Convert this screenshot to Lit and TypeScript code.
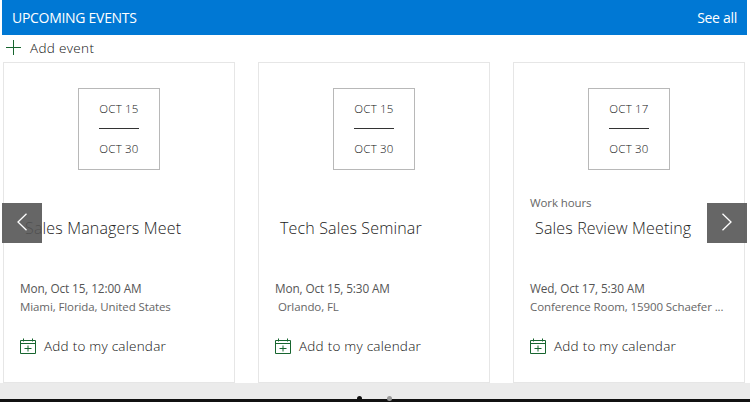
import { LitElement, html, css, svg } from "lit";
import { customElement } from "lit/decorators.js";

interface Ev {
  from: string;
  to: string;
  tag?: string;
  title: string;
  when: string;
  where: string;
}

const EVENTS: Ev[] = [
  { from: "OCT 15", to: "OCT 30", title: "Sales Managers Meet", when: "Mon, Oct 15, 12:00 AM", where: "Miami, Florida, United States" },
  { from: "OCT 15", to: "OCT 30", title: "Tech Sales Seminar", when: "Mon, Oct 15, 5:30 AM", where: "\u00a0Orlando, FL" },
  { from: "OCT 17", to: "OCT 30", tag: "Work hours", title: "Sales Review Meeting", when: "Wed, Oct 17, 5:30 AM", where: "Conference Room, 15900 Schaefer ..." },
];

const calIcon = svg`<svg class="cal" viewBox="0 0 16 16" width="16" height="16" fill="none" stroke="#17652f" stroke-width="1">
  <path d="M.5 2.5h15v13H.5zM.5 5.5h15M3.5 .5v3M12.5 .5v3M8 7.5v6M4.5 10.5h7"/></svg>`;

@customElement("app-root")
export class AppRoot extends LitElement {
  static styles = css`
    :host {
      display: flex; flex-direction: column; position: relative; overflow: hidden;
      width: 750px; height: 402px; background: #fff; color: #333;
      font-family: "Open Sans", "Noto Sans", sans-serif;
    }
    .head {
      flex: none; height: 35px; margin: 0 3px 0 2px; padding: 0 10px; background: #0078d4; color: #fff;
      display: flex; align-items: center; justify-content: space-between;
      font-size: 14px; font-weight: 500; letter-spacing: -.29px;
    }
    .add {
      flex: none; height: 27px; display: flex; align-items: center; gap: 9px; padding: 0 0 2px 6px; box-sizing: border-box;
      font-size: 13.5px; font-weight: 300; letter-spacing: .34px; color: #111;
    }
    .add svg { display: block; }
    .cards { flex: none; display: flex; gap: 23px; padding-left: 3px; height: 321px; }
    .card {
      box-sizing: border-box; width: 232px; height: 321px; border: 1px solid #e6e6e6;
      display: flex; flex-direction: column; padding: 25px 16px 0 16px; background: #fff;
    }
    .dates {
      box-sizing: border-box; width: 82px; height: 82px; border: 1px solid #b8b8b8; align-self: center;
      display: flex; flex-direction: column; align-items: center; font-size: 11.5px; font-weight: 300; letter-spacing: .2px; color: #111;
      padding-top: 10px; flex: none;
    }
    .dates span { line-height: 20px; height: 20px; }
    .dates i { display: block; width: 40px; height: 1px; background: #333; margin: 9px 0 10px; flex: none; }
    .tag { height: 20px; margin-top: 23px; line-height: 20px; font-size: 11.5px; font-weight: 400; letter-spacing: -.1px; color: #666; }
    .title { height: 30px; line-height: 30px; padding-left: 5px; font-size: 16px; font-weight: 300; letter-spacing: .16px; color: #222; white-space: nowrap; }
    .when { margin-top: 35px; height: 20px; line-height: 20px; font-size: 11.8px; font-weight: 400; letter-spacing: -.12px; color: #555; }
    .where {
      height: 18px; line-height: 18px; font-size: 11.5px; font-weight: 400; letter-spacing: -.1px; color: #666;
      white-space: nowrap;
    }
    .cta { margin-top: 20px; display: flex; align-items: center; gap: 8px; font-size: 13.5px; font-weight: 300; letter-spacing: .24px; height: 20px; color: #111; }
    .cal { display: block; flex: none; }
    .nav {
      position: absolute; top: 203px; width: 40px; height: 40px; background: rgba(85,85,85,.9);
      display: flex; align-items: center; justify-content: center;
    }
    .nav svg { margin-top: -2px; }
    .nav.l { left: 2px; }
    .nav.r { right: 3px; }
    .foot { flex: none; height: 16px; background: #ebebeb; }
    .bar { flex: none; height: 3px; background: #111; }
    .dot { position: absolute; top: 396px; width: 5px; height: 5px; border-radius: 50%; }
    .dot.a { left: 357px; background: #111; }
    .dot.b { left: 387px; background: #999; }
  `;
  render() {
    return html`
      <div class="head"><span>UPCOMING EVENTS</span><span>See all</span></div>
      <div class="add">
        <svg width="15" height="15" viewBox="0 0 15 15" fill="none" stroke="#17652f" stroke-width="1"><path d="M7.5 0v15M0 7.5h15"/></svg>
        <span>Add event</span>
      </div>
      <div class="cards">
        ${EVENTS.map(e => html`
          <div class="card">
            <div class="dates"><span>${e.from}</span><i></i><span>${e.to}</span></div>
            <div class="tag">${e.tag ?? ""}</div>
            <div class="title">${e.title}</div>
            <div class="when">${e.when}</div>
            <div class="where">${e.where}</div>
            <div class="cta">${calIcon}<span>Add to my calendar</span></div>
          </div>`)}
      </div>
      <div class="foot"></div>
      <div class="bar"></div>
      <span class="dot a"></span><span class="dot b"></span>
      <div class="nav l"><svg width="12" height="18" viewBox="0 0 12 18" fill="none" stroke="#fff" stroke-width="1.3"><path d="M10.5 .8 2 9l8.5 8.2"/></svg></div>
      <div class="nav r"><svg width="12" height="18" viewBox="0 0 12 18" fill="none" stroke="#fff" stroke-width="1.3"><path d="M1.5 .8 10 9l-8.5 8.2"/></svg></div>
    `;
  }
}
